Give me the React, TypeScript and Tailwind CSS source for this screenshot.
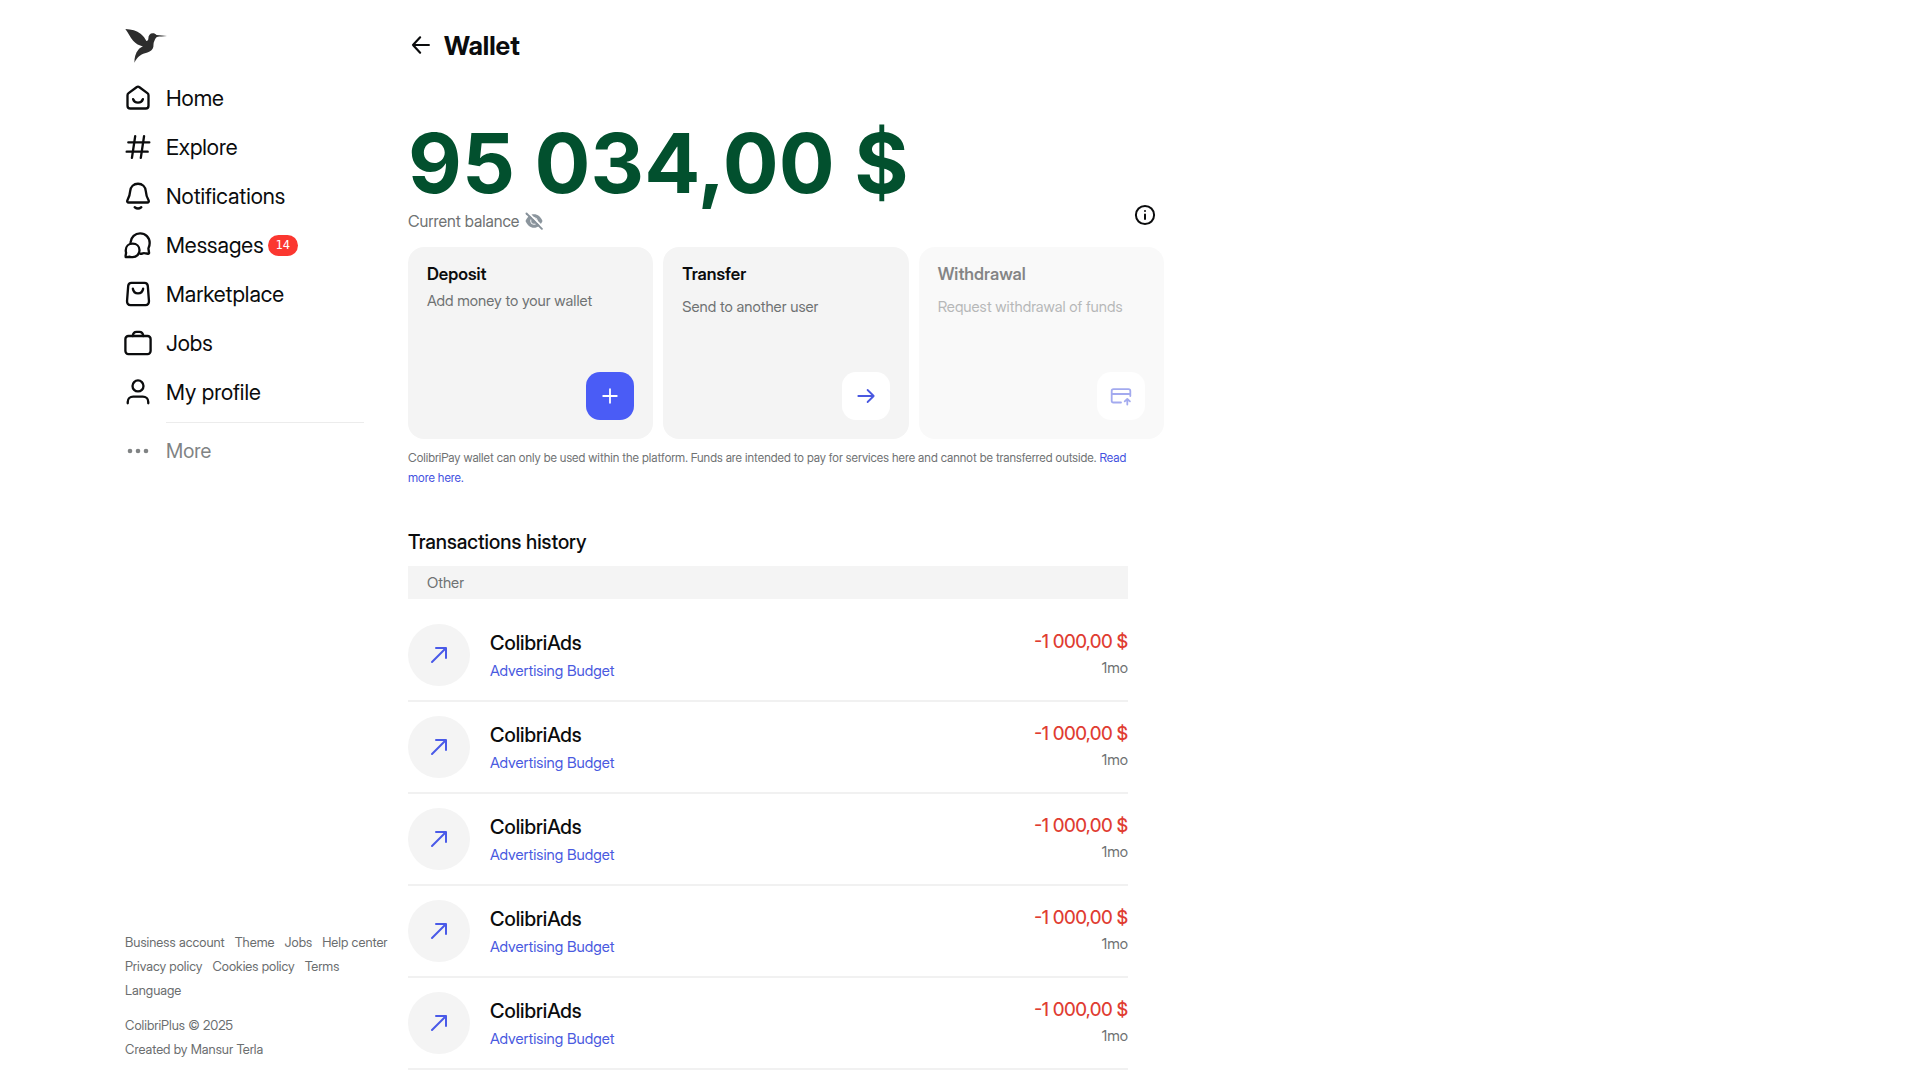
import type { ReactNode } from 'react';

type IconProps = { className?: string; children: ReactNode };

function Icon({ className = 'size-7 stroke-2', children }: IconProps) {
  return (
    <svg
      className={`${className} shrink-0`}
      viewBox="0 0 24 24"
      fill="none"
      stroke="currentColor"
      strokeWidth="1.8"
      strokeLinecap="round"
      strokeLinejoin="round"
      aria-hidden="true"
    >
      {children}
    </svg>
  );
}

const navItems: { label: string; badge?: string; icon: ReactNode }[] = [
  {
    label: 'Home',
    icon: (
      <>
        <path d="M3 9.600c0-.75.35-1.300.95-1.750l6.800-5.100c.8-.6 1.700-.6 2.500 0l6.800 5.100c.6.450.95 1 .95 1.750v9c0 1.500-.9 2.400-2.400 2.400H5.400C3.900 21 3 20.100 3 18.600z" />
        <path d="M7.800 13c.6 1.900 2.200 3 4.200 3s3.600-1.100 4.200-3" />
      </>
    ),
  },
  { label: 'Explore', icon: <path d="M9.600 2.700 6.800 21.300M17.200 2.700l-2.800 18.600M3.700 8h18M2.300 16h18" /> },
  {
    label: 'Notifications',
    icon: (
      <>
        <path d="M12 1.500c-3.700 0-6.400 2.700-6.700 6.400-.2 3.200-.7 4.900-2.400 7.800-.6 1 .1 1.900 1.100 1.900h16c1 0 1.700-.9 1.100-1.900-1.700-2.900-2.200-4.600-2.400-7.800C18.400 4.200 15.700 1.500 12 1.500z" />
        <path d="M9.200 21.600c1.700 1.300 3.900 1.300 5.600 0" />
      </>
    ),
  },
  {
    label: 'Messages',
    badge: '14',
    icon: (
      <>
        <path d="M5.600 9.800C6 5.300 9.500 2 13.800 2c4.700 0 8.200 3.700 8.200 8.300 0 1.500-.3 2.800-.9 4-.2.400-.2.900-.1 1.400l.5 2.900c.1.600-.3 1-.9.900l-3.200-.5c-.4-.1-.8 0-1.200.1-.8.300-1.600.4-2.400.4" />
        <path d="M7.400 10.800c-3.400 0-5.900 2.400-5.900 5.700 0 .8.100 1.500.3 2.200l-.5 3c-.1.500.2.800.7.700l3.100-.3c.7.200 1.500.3 2.300.3 3.400 0 5.900-2.600 5.900-5.900s-2.500-5.700-5.900-5.700z" />
      </>
    ),
  },
  {
    label: 'Marketplace',
    icon: (
      <>
        <path d="M6.400 2.500h11.200c1.600 0 2.600.9 2.800 2.500l1 13c.1 2-1 3.500-3 3.500H5.600c-2 0-3.100-1.500-3-3.500l1-13c.2-1.600 1.200-2.500 2.800-2.500z" />
        <path d="M7.600 7.500c.4 2.400 2.100 4 4.400 4s4-1.600 4.400-4" />
      </>
    ),
  },
  {
    label: 'Jobs',
    icon: (
      <>
        <rect x="1.200" y="6" width="21.600" height="15.500" rx="2.600" />
        <path d="M7.500 6c.3-2.300 1.400-3.500 3.200-3.500h2.600c1.800 0 2.900 1.200 3.200 3.500" />
      </>
    ),
  },
  {
    label: 'My profile',
    icon: (
      <>
        <circle cx="12" cy="6.800" r="4.700" />
        <path d="M3.200 21.700v-1.200c0-2.700 2-4.500 4.700-4.500h8.200c2.700 0 4.700 1.800 4.700 4.500v1.200" />
      </>
    ),
  },
];

const footerLinks = ['Business account', 'Theme', 'Jobs', 'Help center', 'Privacy policy', 'Cookies policy', 'Terms', 'Language'];

const transactions = [1, 2, 3, 4, 5].map((id) => ({
  id,
  title: 'ColibriAds',
  purpose: 'Advertising Budget',
  amount: '-1 000,00 $',
  age: '1mo',
}));

function Logo() {
  return (
    <svg className="h-[35px] w-[42px]" viewBox="44 54 124 102" fill="#2d2d2d" aria-hidden="true">
      <path d="M45 56c18 1 34 5 45 14 8 6 14 15 17 22 4-1 6-4 6-8 0-9 5-15 13-15 5 0 8 2 11 5 11 1 21 2 31 3-11 1-21 1-30 3-3 2-5 6-7 11-5 8-1 16-5 23-4 8-13 11-23 14-14 4-24 12-31 28-1-13 3-29 12-39 3-4 8-7 13-9-11-3-21-8-29-17-9-11-14-23-23-35z" />
    </svg>
  );
}

function Sidebar() {
  return (
    <aside className="sticky top-0 flex h-screen w-[264px] shrink-0 flex-col justify-between pt-7 pb-[19px]">
      <div>
        <a href="#home" aria-label="ColibriPlus" className="block w-fit pl-px">
          <Logo />
        </a>
        <nav className="mt-[11px]">
          <ul className="flex flex-col gap-px">
            {navItems.map((item) => (
              <li key={item.label}>
                <a href="#nav" className="flex h-12 items-center gap-3.5 text-[22px]">
                  <Icon>{item.icon}</Icon>
                  <span className="flex items-center gap-1">
                    {item.label}
                    {item.badge && (
                      <span className="flex h-[21px] items-center rounded-full bg-[#fb3730] px-2 font-['DejaVu_Sans_Mono',monospace] text-[12px] text-white">
                        {item.badge}
                      </span>
                    )}
                  </span>
                </a>
              </li>
            ))}
          </ul>
          <hr className="mt-1.5 mr-6 ml-[42px] border-[#ececec]" />
          <button type="button" className="mt-1 flex h-12 items-center gap-3.5 text-[20px] text-[#808384]">
            <svg className="size-7" viewBox="0 0 28 28" fill="currentColor" aria-hidden="true">
              <circle cx="6" cy="14" r="2.300" />
              <circle cx="14" cy="14" r="2.300" />
              <circle cx="22" cy="14" r="2.300" />
            </svg>
            More
          </button>
        </nav>
      </div>
      <footer className="pl-px text-[13px] leading-6 text-[#6b6e6f]">
        <ul className="flex flex-wrap gap-x-2.5">
          {footerLinks.map((label) => (
            <li key={label}>
              <a href="#footer">{label}</a>
            </li>
          ))}
        </ul>
        <p className="mt-[11px]">ColibriPlus © 2025</p>
        <p>Created by Mansur Terla</p>
      </footer>
    </aside>
  );
}

type ActionCardProps = {
  title: string;
  text: string;
  textClass: string;
  buttonClass: string;
  disabled?: boolean;
  children: ReactNode;
};

function ActionCard({ title, text, textClass, buttonClass, disabled, children }: ActionCardProps) {
  return (
    <article className={`flex h-48 flex-col rounded-2xl bg-[#f4f4f4] p-[19px] ${disabled ? 'opacity-50' : ''}`}>
      <h2 className="text-[17px] leading-4 font-semibold">{title}</h2>
      <p className={`text-[15px] leading-5 text-[#6f7273] ${textClass}`}>{text}</p>
      <button
        type="button"
        aria-label={title}
        disabled={disabled}
        className={`mt-auto flex size-12 items-center justify-center self-end rounded-[14px] ${buttonClass}`}
      >
        {children}
      </button>
    </article>
  );
}

export default function App() {
  return (
    <div className="min-h-screen bg-white font-['Inter_Display','Inter',sans-serif] text-[#0b0c0d]">
      <div className="mx-auto flex max-w-[1672px] gap-5">
        <Sidebar />
        <main className="w-full max-w-[756px] min-w-0">
          <header className="flex h-[90px] items-center gap-2.5">
            <button type="button" aria-label="Back">
              <Icon className="size-[26px] stroke-2">
                <path d="M19.300 12H4.600M11.200 4.900 4.600 12l6.600 7.100" />
              </Icon>
            </button>
            <h1 className="text-[26px] font-bold">Wallet</h1>
          </header>

          <section className="mt-[33px]">
            <p className="font-['Inter',sans-serif] text-[83px] leading-[80px] font-bold whitespace-nowrap text-[#02502e]">95 034,00 $</p>
            <div className="flex items-start justify-between pr-[7px]">
              <div className="mt-2 flex items-center gap-1.5 text-[16px] leading-5 text-[#6f7273]">
                Current balance
                <button type="button" aria-label="Hide balance">
                  <svg className="size-[18px]" viewBox="0 0 24 24" fill="none" aria-hidden="true">
                    <path d="M12 3c5 0 9 3.500 11.300 9C21 17.500 17 21 12 21S3 17.500.7 12C3 6.500 7 3 12 3z" fill="#8b959d" />
                    <circle cx="12" cy="12" r="4.500" stroke="#fff" strokeWidth="1.200" />
                    <path d="M4 .5l20 20" stroke="#fff" strokeWidth="2.500" />
                    <path d="M2 2l20.500 20.500" stroke="#87919a" strokeWidth="2.500" strokeLinecap="round" />
                  </svg>
                </button>
              </div>
              <button type="button" aria-label="Wallet information" className="mb-5 h-6">
                <Icon className="size-6 stroke-2">
                  <circle cx="12" cy="12" r="9.100" />
                  <path d="M12 11.500v4.500M12 8v.1" />
                </Icon>
              </button>
            </div>
          </section>

          <section className="grid grid-cols-3 gap-2.5">
            <ActionCard title="Deposit" text="Add money to your wallet" textClass="mt-[9px]" buttonClass="bg-[#4a5cf6] text-white">
              <Icon className="size-6">
                <path d="M12 5.200v13.600M5.200 12h13.600" />
              </Icon>
            </ActionCard>
            <ActionCard title="Transfer" text="Send to another user" textClass="mt-[15px]" buttonClass="bg-white text-[#4a58e0]">
              <Icon className="size-6">
                <path d="M4.300 12h15.400M13.600 6l6.100 6-6.100 6" />
              </Icon>
            </ActionCard>
            <ActionCard title="Withdrawal" text="Request withdrawal of funds" textClass="mt-[15px]" buttonClass="bg-white text-[#4a58e0]" disabled>
              <Icon className="size-6">
                <path d="M12 18.500H4.500c-1.100 0-1.800-.7-1.800-1.800V7c0-1.100.7-1.800 1.800-1.800h15c1.100 0 1.800.7 1.800 1.800v5M2.700 10h18.600M18.300 20.500v-5M15.700 17.400l2.600-2.400 2.600 2.400" />
              </Icon>
            </ActionCard>
          </section>

          <p className="mt-[9px] text-[12px] leading-5 text-[#6f7273]">
            ColibriPay wallet can only be used within the platform. Funds are intended to pay for services here and cannot be transferred
            outside.{' '}
            <a href="#wallet" className="text-[#4352e0]">
              Read <span className="whitespace-nowrap">more here.</span>
            </a>
          </p>

          <section className="mt-10 max-w-[720px]">
            <h2 className="text-[20px] leading-7 font-medium">Transactions history</h2>
            <h3 className="mt-[10px] bg-[#f4f4f4] px-[19px] text-[15px] leading-[33px] text-[#6f7273]">Other</h3>
            <ul className="mt-[11px]">
              {transactions.map((tx) => (
                <li key={tx.id} className="flex h-[92px] items-center gap-5 border-b-2 border-[#f1f1f1]">
                  <span className="flex size-[62px] shrink-0 items-center justify-center rounded-full bg-[#f4f4f4] text-[#4a5ae8]">
                    <Icon className="size-6 stroke-2">
                      <path d="M5 19 19 5M9 5h10v10" />
                    </Icon>
                  </span>
                  <div className="min-w-0 flex-1 pt-[3px]">
                    <p className="text-[20px] leading-7 font-medium">{tx.title}</p>
                    <p className="text-[15px] leading-7 text-[#4a5ae0]">{tx.purpose}</p>
                  </div>
                  <div className="text-right">
                    <p className="text-[18px] leading-[26px] font-medium text-[#e03c31]">{tx.amount}</p>
                    <p className="text-[15px] leading-[26px] text-[#6f7273]">{tx.age}</p>
                  </div>
                </li>
              ))}
            </ul>
          </section>
        </main>
      </div>
    </div>
  );
}
